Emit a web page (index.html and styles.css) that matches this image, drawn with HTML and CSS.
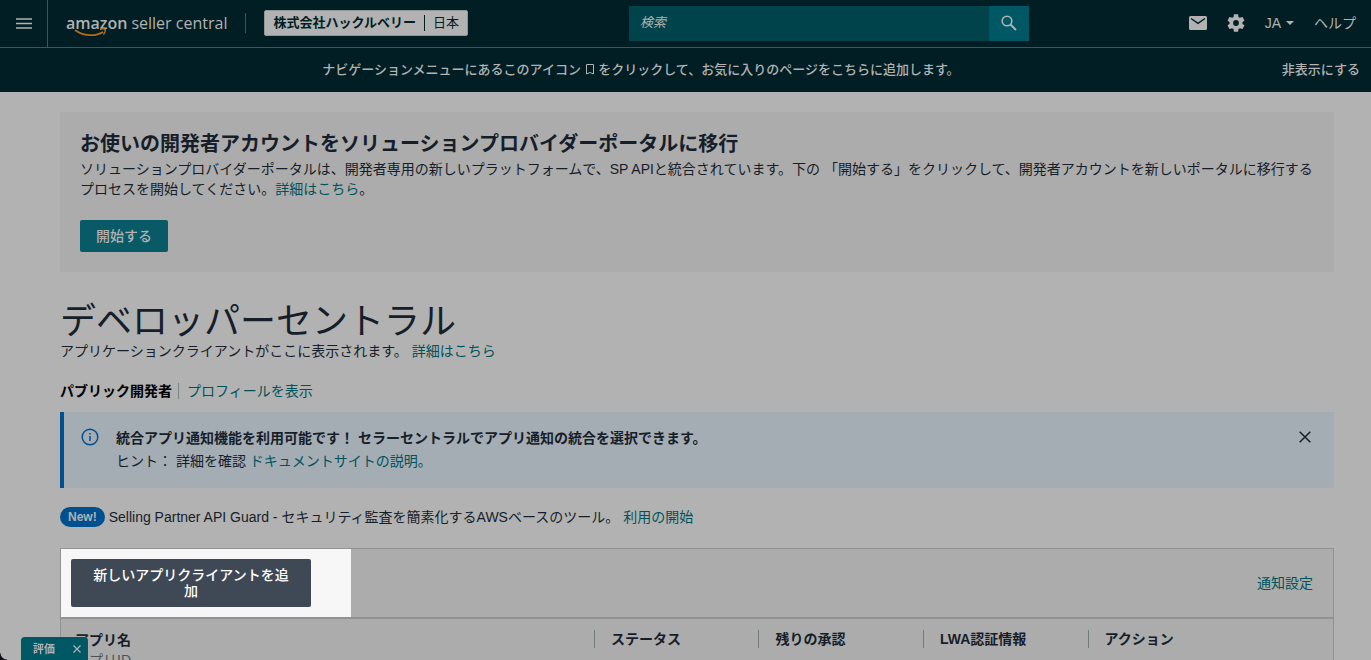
FILE: index.html
```html
<!DOCTYPE html>
<html lang="ja">
<head>
  <meta charset="UTF-8">
  <meta name="viewport" content="width=device-width, initial-scale=1.0">
  <title>デベロッパーセントラル</title>
  <link rel="stylesheet" href="styles.css">
</head>
<body>
  <header class="navbar">
    <button type="button" class="icon-btn menu-btn" aria-label="メニュー">
      <svg width="16" height="12" viewBox="0 0 16 12"><path d="M0 1h16M0 5.500h16M0 10h16" stroke="currentColor" stroke-width="1.600"/></svg>
    </button>
    <a href="#" class="logo">
      <span class="logo-amazon">amazon</span><span class="logo-seller">seller central</span>
      <svg class="smile" width="34" height="10" viewBox="0 0 34 10" fill="none" stroke="#b56d16"><path d="M1 2C9 8 21 9 29 4" stroke-width="1.800"/><path d="M26 1.500c2-.8 4-.8 5.200-.2.300 1.700-.5 3.700-1.800 5.200" stroke-width="1.400"/></svg>
    </a>
    <button type="button" class="account"><strong>株式会社ハックルベリー</strong><span>日本</span></button>
    <form class="search">
      <input type="search" placeholder="検索" aria-label="検索">
      <button type="button" aria-label="検索する">
        <svg width="16" height="16" viewBox="0 0 16 16" fill="none" stroke="currentColor"><circle cx="6" cy="6" r="4.800" stroke-width="1.600"/><path d="M9.500 9.500l5.500 5.500" stroke-width="2"/></svg>
      </button>
    </form>
    <nav class="tools">
      <a href="#" aria-label="メッセージ">
        <svg width="18" height="14" viewBox="0 0 18 14"><rect width="18" height="14" rx="1.500" fill="currentColor"/><path d="M2 2.500l7 4.800 7-4.800" fill="none" stroke="#001e24" stroke-width="1.500"/></svg>
      </a>
      <a href="#" aria-label="設定">
        <svg width="18" height="18" viewBox="2 2 20 20"><path fill="currentColor" d="M19.140 12.940c.04-.3.060-.61.060-.94 0-.32-.02-.64-.07-.94l2.030-1.580c.18-.14.230-.41.120-.61l-1.920-3.320c-.12-.22-.37-.29-.59-.22l-2.390.96c-.5-.38-1.030-.7-1.620-.94l-.36-2.540c-.04-.24-.24-.41-.48-.41h-3.840c-.24 0-.43.170-.47.410l-.36 2.540c-.59.240-1.130.570-1.620.94l-2.390-.96c-.22-.08-.47 0-.59.220L2.740 8.870c-.12.210-.08.470.12.610l2.030 1.580c-.05.300-.09.630-.09.940s.02.640.07.940l-2.030 1.580c-.18.140-.23.410-.12.610l1.920 3.320c.12.220.37.290.59.220l2.390-.96c.5.380 1.030.7 1.620.94l.36 2.540c.05.240.24.410.48.410h3.840c.24 0 .44-.17.470-.41l.36-2.540c.59-.24 1.130-.56 1.620-.94l2.390.96c.22.080.47 0 .59-.22l1.920-3.320c.12-.22.070-.47-.12-.61l-2.010-1.580zM12 15.200A3.200 3.200 0 1 1 12 8.800a3.200 3.200 0 0 1 0 6.400z"/></svg>
      </a>
      <button type="button" class="lang-btn">JA <svg width="8" height="4" viewBox="0 0 8 4"><path d="M0 0h8L4 4z" fill="currentColor"/></svg></button>
      <a href="#">ヘルプ</a>
    </nav>
  </header>

  <div class="favorites-bar">
    <p>ナビゲーションメニューにあるこのアイコン <svg width="8" height="11" viewBox="0 0 8 11"><path d="M.5.500h7v9.500L4 8.500.5 10z" fill="none" stroke="currentColor"/></svg> をクリックして、お気に入りのページをこちらに追加します。</p>
    <button type="button">非表示にする</button>
  </div>

  <main class="content">
    <section class="migrate">
      <h2>お使いの開発者アカウントをソリューションプロバイダーポータルに移行</h2>
      <p>ソリューションプロバイダーポータルは、開発者専用の新しいプラットフォームで、SP APIと統合されています。下の 「開始する」をクリックして、開発者アカウントを新しいポータルに移行するプロセスを開始してください。<a href="#">詳細はこちら</a>。</p>
      <button type="button" class="btn-primary">開始する</button>
    </section>

    <h1>デベロッパーセントラル</h1>
    <p>アプリケーションクライアントがここに表示されます。 <a href="#">詳細はこちら</a></p>

    <div class="profile">
      <strong>パブリック開発者</strong>
      <a href="#">プロフィールを表示</a>
    </div>

    <section class="notice">
      <svg class="info" width="18" height="18" viewBox="0 0 18 18"><circle cx="9" cy="9" r="7.800" fill="none" stroke="currentColor" stroke-width="1.500"/><path d="M9 8v5M9 5v1.600" stroke="currentColor" stroke-width="1.500"/></svg>
      <div class="notice-text">
        <strong>統合アプリ通知機能を利用可能です！ セラーセントラルでアプリ通知の統合を選択できます。</strong>
        <p>ヒント： 詳細を確認 <a href="#">ドキュメントサイトの説明。</a></p>
      </div>
      <button type="button" class="icon-btn" aria-label="閉じる">
        <svg width="12" height="12" viewBox="0 0 12 12"><path d="M.7.700l10.600 10.600M11.300.700L.7 11.300" stroke="currentColor" stroke-width="1.500"/></svg>
      </button>
    </section>

    <p class="guard"><span class="badge">New!</span>Selling Partner API Guard - セキュリティ監査を簡素化するAWSベースのツール。 <a href="#">利用の開始</a></p>

    <section class="apps">
      <div class="apps-toolbar">
        <div class="spotlight">
          <button type="button" class="btn-add">新しいアプリクライアントを追加</button>
        </div>
        <a href="#">通知設定</a>
      </div>
      <table>
        <thead>
          <tr>
            <th class="col-name">アプリ名<small>アプリID</small></th>
            <th><span>ステータス</span></th>
            <th><span>残りの承認</span></th>
            <th><span>LWA認証情報</span></th>
            <th class="col-action"><span>アクション</span></th>
          </tr>
        </thead>
      </table>
    </section>
  </main>

  <div class="feedback">
    <button type="button">評価</button>
    <button type="button" aria-label="評価を閉じる">
      <svg width="8" height="8" viewBox="0 0 8 8"><path d="M.5.500l7 7M7.500.500l-7 7" stroke="currentColor" stroke-width="1.200"/></svg>
    </button>
  </div>
  <div class="corner"></div>
</body>
</html>
```
FILE: styles.css
```css
* {
  box-sizing: border-box;
}
body {
  margin: 0;
  height: 100vh;
  overflow: hidden;
  background: #b2b2b2;
  color: #161e2a;
  font-family: "Liberation Sans", "Noto Sans CJK JP", sans-serif;
  font-size: 14px;
  line-height: 20px;
}
h1, h2, p {
  margin: 0;
}
a {
  color: #00535c;
  text-decoration: none;
}
button {
  border: none;
  padding: 0;
  background: none;
  color: inherit;
  font: inherit;
  cursor: pointer;
}
svg {
  flex: none;
}
.icon-btn {
  display: flex;
  align-items: center;
  justify-content: center;
}

/* top navigation */
.navbar {
  display: flex;
  align-items: center;
  height: 48px;
  padding-bottom: 1px;
  background: #001e24;
  border-bottom: 1px solid #46534f;
  color: #b2b2b2;
}
.menu-btn {
  align-self: flex-start;
  width: 48px;
  height: 47px;
  border-right: 1px solid #46534f;
}
.logo {
  position: relative;
  display: flex;
  gap: 4px;
  margin-left: 18px;
  padding-right: 18px;
  border-right: 1px solid #46534f;
  color: #b2b2b2;
  font-family: "Open Sans", sans-serif;
  font-size: 16px;
  white-space: nowrap;
}
.logo-amazon {
  font-weight: 600;
}
.logo-seller {
  font-weight: 400;
}
.smile {
  position: absolute;
  left: 8px;
  top: 15px;
}
.account {
  display: flex;
  align-items: center;
  height: 26px;
  margin-left: 18px;
  padding: 0 8px;
  background: #b2b2b2;
  border: 1px solid #8f9696;
  border-radius: 2px;
  color: #001e24;
  font-size: 13px;
  line-height: 16px;
  white-space: nowrap;
}
.account span {
  margin-left: 8px;
  padding-left: 8px;
  border-left: 1px solid #001e24;
}
.search {
  display: flex;
  width: 400px;
  height: 35px;
  margin-left: 161px;
}
.search input {
  flex: 1;
  min-width: 0;
  padding: 0 11px;
  border: none;
  background: #00434b;
  color: #b2b2b2;
  font: inherit;
  font-size: 13px;
}
.search input::placeholder {
  color: #b2b2b2;
  font-style: italic;
}
.search button {
  display: flex;
  align-items: center;
  justify-content: center;
  width: 40px;
  background: #005865;
}
.tools {
  display: flex;
  align-items: center;
  gap: 20px;
  margin-left: auto;
  padding-right: 15px;
}
.tools a {
  display: flex;
  color: #b2b2b2;
}
.lang-btn {
  display: flex;
  align-items: center;
  gap: 5px;
}

.favorites-bar {
  display: flex;
  align-items: center;
  height: 44px;
  padding-right: 11px;
  background: #001e24;
  color: #b2b2b2;
  font-size: 13px;
  font-weight: 500;
}
.favorites-bar p {
  flex: 1;
  text-align: center;
}
.favorites-bar svg {
  margin: 0 1px;
  vertical-align: -1px;
}

.content {
  padding: 20px 37px 0 60px;
}

.migrate {
  padding: 20px;
  background: #acacac;
}
.migrate h2 {
  margin-bottom: 3px;
  font-size: 20px;
  line-height: 24px;
}
.btn-primary {
  height: 32px;
  margin-top: 21px;
  padding: 0 16px;
  background: #085a67;
  border-radius: 2px;
  color: #b2b2b2;
  font-weight: 500;
}

h1 {
  margin-top: 30px;
  font-size: 36px;
  font-weight: 400;
  line-height: 39px;
}

.profile {
  display: flex;
  align-items: center;
  margin: 20px 0 11px;
}
.profile strong {
  color: #000;
}
.profile a {
  margin-left: 6px;
  padding-left: 8px;
  border-left: 1px solid #7a8686;
  line-height: 16px;
}

.notice {
  display: flex;
  align-items: flex-start;
  height: 76px;
  padding: 16px 23px 0 17px;
  border-left: 4px solid #00508f;
  background: #a4acb4;
}
.notice .info {
  color: #00508f;
}
.notice-text {
  flex: 1;
  margin-left: 17px;
}
.notice-text p {
  margin-top: 3px;
}
.notice .icon-btn {
  height: 18px;
}

.guard {
  margin: 19px 0 21px;
}
.badge {
  display: inline-block;
  margin-right: 4px;
  padding: 0 8px;
  border-radius: 10px;
  background: #00508f;
  color: #b2b2b2;
  font-size: 12px;
  font-weight: bold;
  vertical-align: top;
}

.apps {
  border: 1px solid #929292;
  background: #acacac;
}
.apps-toolbar {
  display: flex;
  align-items: center;
  justify-content: space-between;
  padding-right: 20px;
  border-bottom: 2px solid #929292;
}
.spotlight {
  width: 290px;
  padding: 10px;
  background: #f7f7f7;
}
.btn-add {
  display: block;
  width: 240px;
  height: 48px;
  padding: 0 20px;
  border-radius: 2px;
  background: #3f4956;
  color: #fff;
  font-weight: 500;
  line-height: 16px;
}
.apps table {
  width: 100%;
  border-collapse: collapse;
  table-layout: fixed;
}
.apps th {
  padding: 11px 0;
  text-align: left;
  vertical-align: top;
}
.apps th span {
  display: block;
  padding-left: 16px;
  border-left: 1px solid #717c7a;
  line-height: 18px;
}
.apps .col-name {
  width: 41.9%;
  padding-left: 14px;
}
.apps .col-action {
  width: 19.3%;
}
.apps small {
  display: block;
  color: #4c5355;
  font-size: 14px;
  font-weight: normal;
}

/* rating tab pinned to the window's bottom edge */
.feedback {
  position: fixed;
  left: 21px;
  bottom: 0;
  display: flex;
  align-items: center;
  justify-content: space-between;
  width: 67px;
  height: 23px;
  padding: 0 7px 0 12px;
  border-radius: 4px 4px 0 0;
  background: #005865;
  box-shadow: 0 0 2px #b2b2b2;
  color: #b2b2b2;
  font-size: 11px;
  font-weight: bold;
}
.feedback button {
  display: flex;
}
.corner {
  position: fixed;
  left: 0;
  bottom: 0;
  width: 7px;
  height: 7px;
  background: radial-gradient(circle at 100% 0, transparent 6px, #0b0b14 7px);
}
```
